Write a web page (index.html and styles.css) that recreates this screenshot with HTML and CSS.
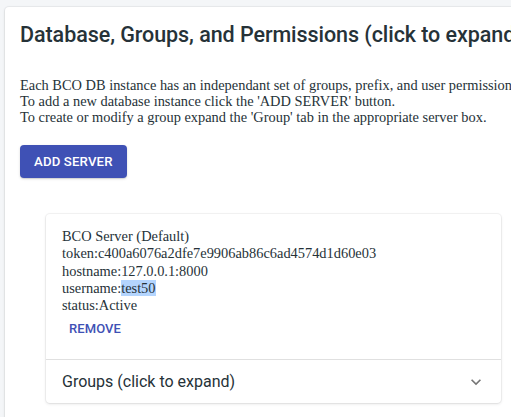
FILE: index.html
```html
<!DOCTYPE html>
<html>
<head>
<meta charset="utf-8">
<link rel="stylesheet" href="styles.css">
</head>
<body>
<div class="page">
  <div class="panel">
    <h2 class="title">Database, Groups, and Permissions (click to expand)</h2>
    <div class="intro">
      Each BCO DB instance has an independant set of groups, prefix, and user permissions.<br>
      To add a new database instance click the 'ADD SERVER' button.<br>
      To create or modify a group expand the 'Group' tab in the appropriate server box.
    </div>
    <button class="btn-contained">ADD SERVER</button>
    <div class="server-card">
      <div class="server-info">
        <div>BCO Server (Default)</div>
        <div>token:c400a6076a2dfe7e9906ab86c6ad4574d1d60e03</div>
        <div>hostname:127.0.0.1:8000</div>
        <div>username:<span class="sel">test50</span></div>
        <div>status:Active</div>
        <button class="btn-text">REMOVE</button>
      </div>
      <div class="groups-row">
        <span class="groups-label">Groups (click to expand)</span>
        <svg class="chev" viewBox="0 0 24 24" width="20" height="20"><path d="M16.59 8.59 12 13.17 7.41 8.59 6 10l6 6 6-6z" fill="#757575"/></svg>
      </div>
    </div>
  </div>
</div>
</body>
</html>
```
FILE: styles.css
```css
html, body {
  margin: 0;
  padding: 0;
  background: #f4f6f8;
  overflow: hidden;
}
.page {
  padding: 7px 0 0 5px;
  width: 700px;
}
.panel {
  background: #fff;
  border-radius: 4px;
  box-shadow: 0 0 0 1px rgba(63,63,68,0.05), 0 1px 3px 0 rgba(63,63,68,0.15);
  padding: 14px 15px 40px 15px;
  width: 640px;
}
.title {
  margin: 0;
  font-family: Roboto, "Liberation Sans", sans-serif;
  font-weight: 500;
  font-size: 21.5px;
  line-height: 28px;
  color: #263238;
  letter-spacing: -0.06px;
  white-space: nowrap;
}
.intro {
  margin-top: 27.5px;
  font-family: "Liberation Serif", serif;
  font-size: 14.4px;
  line-height: 16px;
  color: #263238;
  white-space: nowrap;
}
.btn-contained {
  display: block;
  margin-top: 20px;
  background: #3f51b5;
  color: #fff;
  border: none;
  border-radius: 4px;
  padding: 6px 14px;
  height: 33px;
  white-space: nowrap;
  font-family: Roboto, "Liberation Sans", sans-serif;
  font-weight: 500;
  font-size: 13.2px;
  line-height: 21px;
  letter-spacing: 0.15px;
  box-shadow: 0 1px 3px rgba(0,0,0,0.12), 0 1px 1px rgba(0,0,0,0.1);
}
.server-card {
  margin: 36px 0 0 26px;
  width: 455px;
  background: #fff;
  border-radius: 4px;
  box-shadow: 0 0 0 1px rgba(63,63,68,0.05), 0 1px 3px 0 rgba(63,63,68,0.15);
}
.server-info {
  padding: 14.5px 16px 15px 16px;
  font-family: "Liberation Serif", serif;
  font-size: 14.4px;
  line-height: 17.3px;
  color: #263238;
  border-bottom: 1px solid #e0e0e0;
}
.sel {
  background: #b4d5fe;
}
.btn-text {
  display: block;
  margin-top: 0;
  margin-left: 2px;
  background: none;
  border: none;
  color: #3f51b5;
  padding: 4px 5px;
  font-family: Roboto, "Liberation Sans", sans-serif;
  font-weight: 500;
  font-size: 13px;
  line-height: 22px;
  letter-spacing: 0.1px;
}
.groups-row {
  display: flex;
  align-items: center;
  justify-content: space-between;
  height: 43px;
  padding: 0 15px 0 16px;
}
.groups-label {
  font-family: Roboto, "Liberation Sans", sans-serif;
  font-size: 16px;
  color: #263238;
}
.chev {
  display: block;
}
```
